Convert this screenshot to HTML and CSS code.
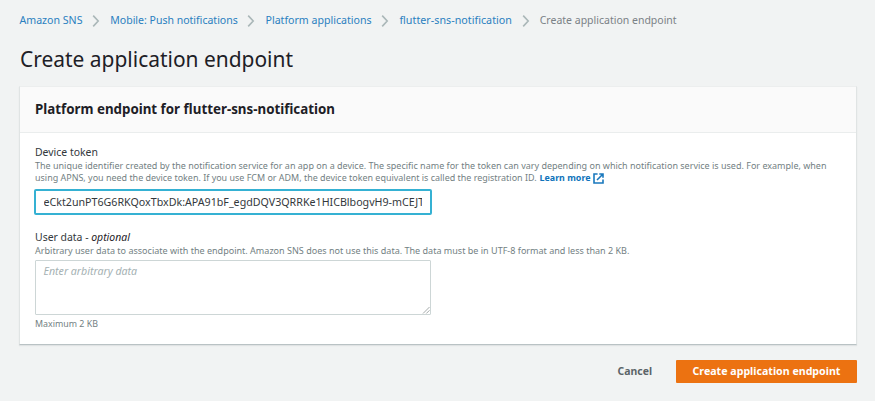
FILE: index.html
```html
<!DOCTYPE html>
<html lang="en">
<head>
<meta charset="utf-8">
<title>Create application endpoint</title>
<link rel="stylesheet" href="styles.css">
</head>
<body>
<nav class="crumbs">
  <a class="c1" href="#">Amazon SNS</a>
  <svg class="chev" viewBox="0 0 8 12"><path d="M1.2 .6l5 5.4-5 5.4"/></svg>
  <a class="c2" href="#">Mobile: Push notifications</a>
  <svg class="chev" viewBox="0 0 8 12"><path d="M1.2 .6l5 5.4-5 5.4"/></svg>
  <a class="c3" href="#">Platform applications</a>
  <svg class="chev" viewBox="0 0 8 12"><path d="M1.2 .6l5 5.4-5 5.4"/></svg>
  <a class="c4" href="#">flutter-sns-notification</a>
  <svg class="chev" viewBox="0 0 8 12"><path d="M1.2 .6l5 5.4-5 5.4"/></svg>
  <span class="c5">Create application endpoint</span>
</nav>
<h1>Create application endpoint</h1>
<main class="card">
  <h2>Platform endpoint for flutter-sns-notification</h2>
  <div class="body">
    <label class="label" for="token">Device token</label>
    <p class="hint device"><span class="line">The unique identifier created by the notification service for an app on a device. The specific name for the token can vary depending on which notification service is used. For example, when</span> <span class="line second"><span>using APNS, you need the device token. If you use FCM or ADM, the device token equivalent is called the registration ID.</span> <a class="learn" href="#">Learn more</a><svg class="ext" viewBox="0 0 11 11"><path d="M4.6 1H1v9h9V6.6M6.3 1H10v3.7M9.8 1.2L4 7"/></svg></span></p>
    <input class="input" id="token" type="text" value="eCkt2unPT6G6RKQoxTbxDk:APA91bF_egdDQV3QRRKe1HICBlbogvH9-mCEJT">
    <label class="label user">User data - <i>optional</i></label>
    <p class="hint arbitrary">Arbitrary user data to associate with the endpoint. Amazon SNS does not use this data. The data must be in UTF-8 format and less than 2 KB.</p>
    <div class="area"><i>Enter arbitrary data</i><svg class="grip" viewBox="0 0 8 8"><path d="M1 7.5L7.5 1M4.3 7.5l3.2-3.2"/></svg></div>
    <p class="hint max">Maximum 2 KB</p>
  </div>
</main>
<footer class="actions">
  <button class="cancel">Cancel</button>
  <button class="primary">Create application endpoint</button>
</footer>
</body>
</html>
```
FILE: styles.css
```css
* { box-sizing: border-box; }
body {
  margin: 0;
  width: 875px;
  height: 401px;
  overflow: hidden;
  background: #f1f3f3;
  color: #1d2026;
  font-family: "Noto Sans", "Open Sans", sans-serif;
  font-size: 10.6px;
}
a { color: #2a80c0; text-decoration: none; }
.crumbs {
  display: flex;
  align-items: center;
  height: 17px;
  margin: 12px 0 0 19.5px;
  line-height: 17px;
  white-space: nowrap;
}
.c2 { font-size: 10.52px; }
.c4 { font-size: 10.7px; letter-spacing: .03px; }
.c5 { font-size: 10.5px; color: #7a8186; }
.chev { width: 8px; height: 12px; margin: 0 10.2px 0 9.6px; flex: none; }
.chev path { fill: none; stroke: #aab7b8; stroke-width: 1.6; }
h1 {
  margin: 15px 0 0 20px;
  font-size: 20.94px;
  font-weight: 400;
  line-height: 30px;
}
.card {
  width: 838px;
  height: 259px;
  margin: 12px 0 0 19px;
  border: 1px solid #e0e4e4;
  border-top-color: #eceeee;
  border-bottom-color: #b9c2c4;
  background: #fff;
  box-shadow: 0 1px 1px #001c2412;
}
h2 {
  height: 46px;
  margin: 0;
  padding-left: 15px;
  border-bottom: 1px solid #eaeded;
  background: #fafafa;
  font-size: 13.33px;
  font-weight: 700;
  line-height: 44px;
}
.body { padding: 12px 0 0 15px; }
.label { display: block; height: 14px; color: #33383c; font-size: 10.45px; line-height: 14px; }
.hint { margin: 0; color: #737f83; font-size: 9px; line-height: 12px; white-space: nowrap; }
.device { padding-top: 1px; }
.line { display: block; height: 12px; }
.second { display: flex; align-items: center; font-size: 8.96px; }
.learn { margin-left: 3px; color: #0f73bb; font-weight: 700; font-size: 8.89px; }
.ext { width: 11px; height: 11px; margin-left: 3px; }
.ext path { fill: none; stroke: #1a78bd; stroke-width: 1.6; }
.input {
  display: block;
  width: 398px;
  height: 26px;
  margin: 5px 0 0 -1px;
  padding: 0 8.5px 0 7.5px;
  border: 2px solid #35b1d3;
  border-radius: 2px;
  outline: 0;
  background: #fff;
  color: #33383c;
  font-family: inherit;
  font-size: 10.68px;
  line-height: 22px;
}
.user { margin-top: 15px; }
.user i { color: #1d2026; }
.arbitrary { margin-top: 1px; font-size: 9.04px; }
.area {
  position: relative;
  width: 396px;
  height: 55px;
  margin-top: 3px;
  padding: 3px 7.5px;
  border: 1px solid #cdd6d6;
  border-radius: 1px;
  color: #a5b1b3;
  line-height: 14px;
}
.grip { position: absolute; right: 0; bottom: 0; width: 8px; height: 8px; }
.grip path { fill: none; stroke: #8d9494; stroke-width: .8; }
.max { margin-top: 3px; font-size: 8.87px; }
.actions { display: flex; justify-content: flex-end; margin: 15px 18px 0 0; }
button {
  height: 23px;
  padding: 0;
  border: 0;
  border-radius: 1px;
  background: none;
  font-family: inherit;
  font-weight: 700;
  line-height: 23px;
}
.cancel { margin-right: 24px; color: #5b6468; font-size: 10.45px; }
.primary { width: 181px; background: #ec7211; color: #fff; font-size: 10.63px; }
```
